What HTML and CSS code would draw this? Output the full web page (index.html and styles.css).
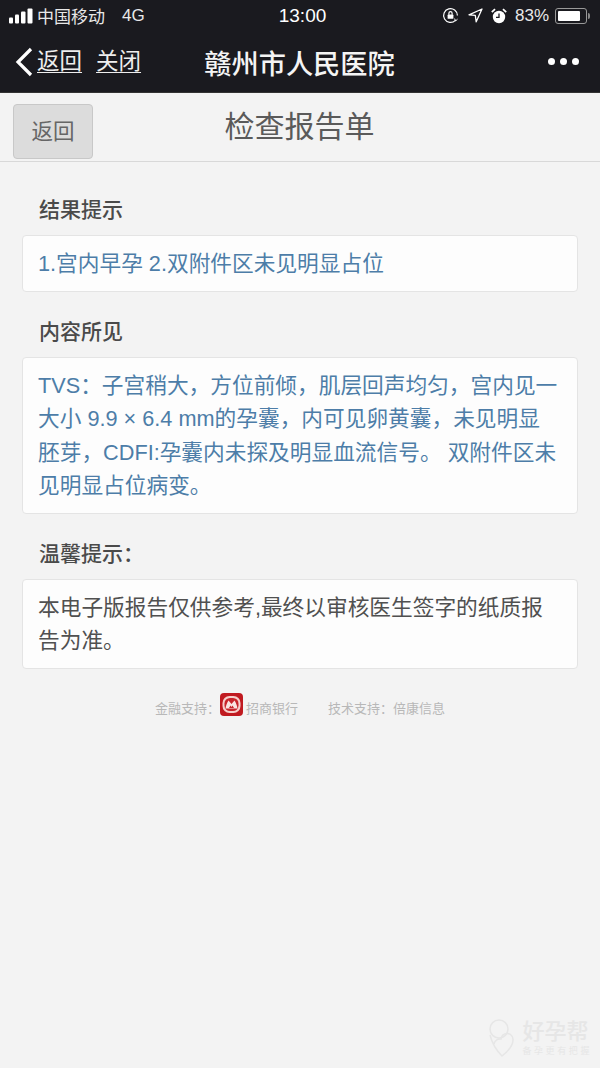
FILE: index.html
```html
<!DOCTYPE html>
<html lang="zh-CN">
<head>
  <meta charset="UTF-8" />
  <meta name="viewport" content="width=device-width, initial-scale=1.0" />
  <title>检查报告单</title>
  <link rel="stylesheet" href="styles.css">
</head>
<body>
  <div class="topbar">
    <div class="status">
      <div class="status-left">
        <svg class="signal" width="24" height="16" viewBox="0 0 24 16">
          <rect x="0" y="9.500" width="4" height="6" rx="1" fill="#fff"/>
          <rect x="6" y="6.500" width="4" height="9" rx="1" fill="#fff"/>
          <rect x="12" y="3.500" width="4.500" height="12" rx="1" fill="#fff"/>
          <rect x="18.500" y="0.500" width="5" height="15" rx="1" fill="#fff"/>
        </svg>
        <span class="carrier">中国移动</span>
        <span class="net">4G</span>
      </div>
      <div class="clock">13:00</div>
      <div class="status-right">
        <svg width="17" height="17" viewBox="0 0 17 17" fill="none" stroke="#fff" stroke-width="1.2">
          <path d="M15.400 8.500a6.900 6.900 0 1 0-2 4.900"/>
          <path d="M12.600 11.600l1 2.400 1.900-1.800" stroke-width="1"/>
          <rect x="5.600" y="7.600" width="5.800" height="4.200" rx=".6" fill="#fff" stroke="none"/>
          <path d="M6.900 7.700V6.200a1.600 1.600 0 0 1 3.200 0v1.500"/>
        </svg>
        <svg class="loc" width="15" height="15" viewBox="0 0 15 15" fill="none" stroke="#fff" stroke-width="1.300" stroke-linejoin="round">
          <path d="M14 1L1 6.800l6.300.6.900 6.400z"/>
        </svg>
        <svg class="alarm" width="16" height="16" viewBox="0 0 16 16">
          <circle cx="8" cy="9" r="6.200" fill="#fff"/>
          <path d="M8 5.500V9.400H5" fill="none" stroke="#1a1a1f" stroke-width="1.300"/>
          <path d="M.8 4.200L4 1.200M15.200 4.200L12 1.200" stroke="#fff" stroke-width="1.800"/>
        </svg>
        <span class="pct">83%</span>
        <div class="battery"><div class="battery-fill"></div></div>
        <div class="battery-tip"></div>
      </div>
    </div>
    <div class="nav">
      <div class="nav-left">
        <svg class="chevron" width="18" height="30" viewBox="0 0 18 30" fill="none" stroke="#fff" stroke-width="3.200">
          <path d="M16 2L3 15l13 13"/>
        </svg>
        <a class="nav-link nav-back">返回</a>
        <a class="nav-link">关闭</a>
      </div>
      <div class="nav-title">赣州市人民医院</div>
      <div class="nav-more"><i></i><i></i><i></i></div>
    </div>
  </div>

  <div class="page-head">
    <button class="btn-back">返回</button>
    <h1>检查报告单</h1>
  </div>

  <div class="content">
    <h2>结果提示</h2>
    <div class="card blue">1.宫内早孕 2.双附件区未见明显占位</div>

    <h2>内容所见</h2>
    <div class="card blue">TVS：子宫稍大，方位前倾，肌层回声均匀，宫内见一大小 9.9 × 6.4 mm的孕囊，内可见卵黄囊，未见明显胚芽，CDFI:孕囊内未探及明显血流信号。 双附件区未见明显占位病变。</div>

    <h2>温馨提示：</h2>
    <div class="card">本电子版报告仅供参考,最终以审核医生签字的纸质报告为准。</div>

    <div class="support">
      <span>金融支持：</span>
      <svg class="bank" width="23" height="23" viewBox="0 0 23 23">
        <rect width="23" height="23" rx="4" fill="#c01a20"/>
        <rect x="2.500" y="3" width="18" height="17" rx="7" fill="#f6cfcb"/>
        <rect x="4.500" y="5" width="14" height="13" rx="5.500" fill="#c8252b"/>
        <path d="M5.500 15.500c.5-3 1.500-6 3-8l3 3.500 3-3.500c1.500 2 2.500 5 3 8z" fill="#f9e4e1"/>
        <path d="M9 15l1.500-2.500 1 1.500 1-1.500L14 15z" fill="#c8252b"/>
      </svg>
      <span class="bank-name">招商银行</span>
      <span>技术支持：倍康信息</span>
    </div>
  </div>

  <div class="watermark">
    <svg width="28" height="40" viewBox="0 0 28 40" fill="none" stroke="#e6e6e6" stroke-width="1.500">
      <circle cx="12" cy="11" r="9"/>
      <path d="M3 17c2 8 7 16 12 21 5-4 11-10 11-16a6 6 0 0 0-12-1 6 6 0 0 0-7 5"/>
    </svg>
    <div class="wm-text">
      <div class="wm-name">好孕帮</div>
      <div class="wm-sub">备孕更有把握</div>
    </div>
  </div>
</body>
</html>
```

FILE: styles.css
```css
* {
  box-sizing: border-box;
}
html, body {
  margin: 0;
  padding: 0;
  height: 100%;
}
body {
  position: relative;
  min-height: 1068px;
  background: #f3f3f3;
  font-family: "Liberation Sans", "Noto Sans CJK SC", sans-serif;
  overflow: hidden;
}

.topbar {
  background: #1a1a1f;
  color: #fff;
  height: 93px;
  border-bottom: 1px solid #333;
}

.status {
  display: flex;
  align-items: center;
  justify-content: space-between;
  height: 31px;
  padding: 0 10px 0 9px;
  font-size: 17px;
  position: relative;
}
.status-left {
  display: flex;
  align-items: center;
}
.carrier {
  margin-left: 4px;
  color: #e8e8e8;
}
.net {
  margin-left: 17px;
  color: #e8e8e8;
}
.clock {
  position: absolute;
  left: 0;
  right: 0;
  padding-left: 5px;
  text-align: center;
  font-size: 19px;
}
.status-right {
  display: flex;
  align-items: center;
  position: relative;
  z-index: 1;
}
.loc {
  margin-left: 9px;
}
.alarm {
  margin-left: 8px;
}
.pct {
  margin-left: 8px;
  font-size: 17px;
  color: #e8e8e8;
}
.battery {
  width: 32px;
  height: 16px;
  margin-left: 6px;
  padding: 2px;
  border: 1px solid #999;
  border-radius: 3px;
}
.battery-fill {
  width: 83%;
  height: 100%;
  background: #fff;
  border-radius: 1px;
}
.battery-tip {
  width: 2px;
  height: 6px;
  margin-left: 1px;
  background: #888;
  border-radius: 0 2px 2px 0;
}

.nav {
  display: flex;
  align-items: center;
  justify-content: space-between;
  height: 61px;
  position: relative;
  padding: 0 21px 0 15px;
}
.nav-left {
  display: flex;
  align-items: center;
}
.chevron {
  margin-right: 4px;
}
.nav-link {
  font-size: 22.5px;
  line-height: 26px;
  color: #eee;
  text-decoration: underline;
  text-underline-offset: 3px;
  text-decoration-thickness: 1px;
}
.nav-back {
  margin-right: 14px;
}
.nav-title {
  position: absolute;
  left: 0;
  right: 0;
  padding-right: 1px;
  text-align: center;
  font-size: 27.2px;
  font-weight: 500;
  color: #f4f4f4;
}
.nav-more {
  display: flex;
  gap: 5px;
  position: relative;
}
.nav-more i {
  display: block;
  width: 7px;
  height: 7px;
  background: #fff;
  border-radius: 50%;
}

.page-head {
  position: relative;
  height: 69px;
  border-bottom: 1px solid #d8d8d8;
  text-align: center;
}
.page-head h1 {
  margin: 0;
  padding-top: 14px;
  padding-right: 1px;
  font-size: 30px;
  line-height: 40px;
  font-weight: 400;
  color: #5a5a5a;
}
.btn-back {
  position: absolute;
  left: 13px;
  top: 11px;
  width: 80px;
  height: 55px;
  padding: 0 0 5px;
  background: #dcdcdc;
  border: 1px solid #c8c8c8;
  border-radius: 4px;
  font: 21.5px "Liberation Sans", "Noto Sans CJK SC", sans-serif;
  color: #666;
}

.content {
  padding: 0 22px;
}
.content h2 {
  margin: 0;
  padding: 26px 17px 11px;
  font-size: 21px;
  line-height: 28px;
  font-weight: 500;
  color: #4a4a4a;
}
.content h2:first-child {
  padding-top: 34px;
}
.card {
  padding: 11px 17px 11px 15px;
  background: #fdfdfd;
  border: 1px solid #e4e4e4;
  border-radius: 4px;
  font-size: 21.7px;
  line-height: 33.2px;
  color: #505050;
}
.card.blue {
  color: #4d7da8;
}

.support {
  display: flex;
  justify-content: center;
  align-items: center;
  margin-top: 29px;
  font-size: 13px;
  color: #b8b8b8;
}
.bank {
  margin: -6px 3px 0 0;
}
.bank-name {
  margin: 0 30px 0 0;
}

.watermark {
  position: absolute;
  right: 8px;
  top: 1018px;
  display: flex;
  gap: 7px;
  color: #e6e6e6;
}
.wm-name {
  font-size: 22px;
  line-height: 27px;
  font-weight: 500;
}
.wm-sub {
  font-size: 9px;
  line-height: 12px;
  letter-spacing: 2.600px;
}
```
